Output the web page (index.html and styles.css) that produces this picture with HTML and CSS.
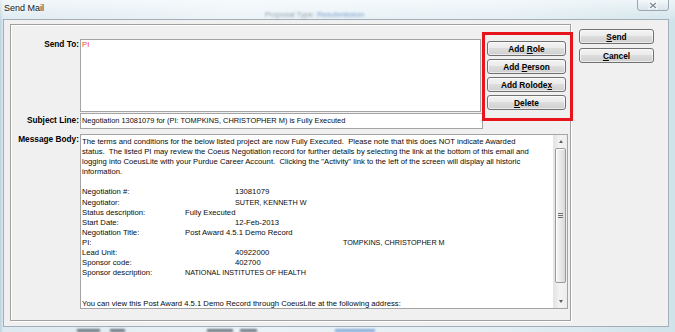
FILE: index.html
```html
<!DOCTYPE html>
<html lang="en">
<head>
    <meta charset="UTF-8">
    <title>Send Mail</title>
    <link rel="stylesheet" href="styles.css">
</head>
<body>
    <div class="titlebar">
        <span class="title">Send Mail</span>
        <span class="ghost">Proposal Type: <span class="ghost-link">Resubmission</span></span>
        <span class="close">
            <svg width="32" height="11" viewBox="0 0 32 11">
                <defs>
                    <linearGradient id="cg" x1="0" y1="0" x2="0" y2="1">
                        <stop offset="0" stop-color="#f4f8fa"/>
                        <stop offset="1" stop-color="#d9e3ea"/>
                    </linearGradient>
                </defs>
                <path d="M0.5 0 V8 Q0.5 10.5 3 10.5 H29 Q31.5 10.5 31.5 8 V0" fill="url(#cg)" stroke="#9aa7b2"/>
                <path d="M13 3 L19 8 M19 3 L13 8" stroke="#fff" stroke-width="3" stroke-linecap="round"/>
                <path d="M13 3 L19 8 M19 3 L13 8" stroke="#7f8c97" stroke-width="1.5"/>
            </svg>
        </span>
    </div>

    <div class="client">
        <div class="panel">
            <div class="form">
                <div class="lbl">Send To:</div>
                <div class="field send-to"><span class="pi">PI</span></div>
                <div class="buttons">
                    <div class="callout"></div>
                    <button>Add <u>R</u>ole</button>
                    <button>Add <u>P</u>erson</button>
                    <button>Add Rolode<u>x</u></button>
                    <button><u>D</u>elete</button>
                </div>

                <div class="lbl subject-lbl">Subject Line:</div>
                <div class="field subject">Negotiation 13081079 for (PI: TOMPKINS, CHRISTOPHER M) is Fully Executed</div>

                <div class="lbl body-lbl">Message Body:</div>
                <div class="field message">
                    <div class="msg-text">
                        <div class="ln">The terms and conditions for the below listed project are now Fully Executed.  Please note that this does NOT indicate Awarded</div>
                        <div class="ln">status.  The listed PI may review the Coeus Negotiation record for further details by selecting the link at the bottom of this email and</div>
                        <div class="ln">logging into CoeusLite with your Purdue Career Account.  Clicking the "Activity" link to the left of the screen will display all historic</div>
                        <div class="ln">information.</div>
                        <div class="ln"></div>
                        <div class="ln"><span class="k">Negotiation #:</span><span class="v2">13081079</span></div>
                        <div class="ln"><span class="k">Negotiator:</span><span class="v2 caps">SUTER, KENNETH W</span></div>
                        <div class="ln"><span class="k">Status description:</span><span>Fully Executed</span></div>
                        <div class="ln"><span class="k">Start Date:</span><span class="v2">12-Feb-2013</span></div>
                        <div class="ln"><span class="k">Negotiation Title:</span><span>Post Award 4.5.1 Demo Record</span></div>
                        <div class="ln"><span class="k">PI:</span><span class="v3 caps">TOMPKINS, CHRISTOPHER M</span></div>
                        <div class="ln"><span class="k">Lead Unit:</span><span class="v2">40922000</span></div>
                        <div class="ln"><span class="k">Sponsor code:</span><span class="v2">402700</span></div>
                        <div class="ln"><span class="k">Sponsor description:</span><span class="caps">NATIONAL INSTITUTES OF HEALTH</span></div>
                        <div class="ln"></div>
                        <div class="ln"></div>
                        <div class="ln">You can view this Post Award 4.5.1 Demo Record through CoeusLite at the following address:</div>
                    </div>
                    <div class="scrollbar">
                        <div class="sb-btn"><span class="arrow-up"></span></div>
                        <div class="sb-thumb"><span class="grip"></span></div>
                        <div class="sb-track"></div>
                        <div class="sb-btn"><span class="arrow-down"></span></div>
                    </div>
                </div>
            </div>
        </div>

        <div class="actions">
            <button><u>S</u>end</button>
            <button><u>C</u>ancel</button>
        </div>
    </div>

    <div class="glass-bottom">
        <span class="blob b1"></span>
        <span class="blob b2"></span>
        <span class="blob b3"></span>
        <span class="blob b4"></span>
        <span class="blob b5"></span>
    </div>
</body>
</html>
```

FILE: styles.css
```css
body {
    margin: 0;
    width: 675px;
    height: 332px;
    overflow: hidden;
    display: flex;
    flex-direction: column;
    font-family: "Liberation Sans", Arial, sans-serif;
    background: linear-gradient(90deg, #bcd2df 0, #dce9f0 3px, #eaf3f7 35%, #e2eef3 75%, #cfe3ea 100%);
}

/* glass title bar */
.titlebar {
    height: 19px;
    display: flex;
    align-items: flex-start;
    background: linear-gradient(180deg, rgba(255,255,255,0.6), rgba(255,255,255,0.1));
}
.title {
    margin: 3px 0 0 4px;
    font-size: 9px;
    line-height: 10px;
    color: #1b1b1b;
    text-shadow: 0 0 4px #fff;
}
.ghost {
    margin: 11px 0 0 221px;
    font-size: 7.5px;
    line-height: 8px;
    color: #7d8b97;
    filter: blur(1.1px);
    opacity: 0.8;
}
.ghost-link {
    color: #5d86c2;
}
.close {
    margin-left: auto;
    margin-right: 6px;
    width: 32px;
    height: 11px;
}
.close svg {
    display: block;
}

/* dialog client area */
.client {
    margin: 0 6px 0 3px;
    height: 308px;
    box-sizing: border-box;
    border: 1px solid #a3aeb8;
    background: #f0f0f0;
    display: flex;
    align-items: flex-start;
}
.panel {
    margin: 4px 0 0 6px;
    width: 561px;
    height: 297px;
    box-sizing: border-box;
    border: 1px solid #a0a0a0;
    box-shadow: inset 1px 1px 0 #fff, 1px 1px 0 #fff;
    padding-top: 14px;
}
.form {
    display: grid;
    grid-template-columns: 69px 403px 87px;
    align-items: start;
}
.lbl {
    grid-column: 1;
    text-align: right;
    padding-right: 1px;
    font-size: 8.3px;
    font-weight: bold;
    line-height: 10px;
    color: #000;
}
.subject-lbl {
    margin-top: 3px;
}
.body-lbl {
    margin-top: 5px;
}

.field {
    background: #fff;
    border: 1px solid #a4a4a4;
    box-sizing: border-box;
    font-size: 7.7px;
    line-height: 10px;
    color: #0a0a0a;
}
.send-to {
    width: 401px;
    height: 73px;
    padding: 0 1px;
}
.pi {
    color: #f03a3a;
}
.subject {
    margin-top: 1px;
    height: 16px;
    padding: 2px 1px;
    font-size: 7.4px;
    white-space: nowrap;
    overflow: hidden;
}
.message {
    grid-column: 2 / span 2;
    margin-top: 5px;
    width: 488px;
    height: 175px;
    display: flex;
    overflow: hidden;
}
.msg-text {
    flex: 1;
    padding: 2px 1px 0;
    overflow: hidden;
}
.ln {
    height: 10.1px;
    line-height: 10.1px;
    white-space: pre;
}
.k {
    display: inline-block;
    width: 103px;
}
.v2 {
    margin-left: 50px;
}
.v3 {
    margin-left: 158px;
}
.caps {
    font-size: 7.2px;
}

/* scrollbar */
.scrollbar {
    width: 14px;
    display: flex;
    flex-direction: column;
    background: linear-gradient(90deg, #e4e4e4, #f3f3f3 45%, #ededed);
    border-left: 1px solid #e6e6e6;
    box-sizing: border-box;
}
.sb-btn {
    height: 13px;
    display: flex;
    justify-content: center;
    align-items: center;
}
.arrow-up,
.arrow-down {
    width: 0;
    height: 0;
    border-left: 2.5px solid transparent;
    border-right: 2.5px solid transparent;
}
.arrow-up {
    border-bottom: 3px solid #606060;
}
.arrow-down {
    border-top: 3px solid #606060;
}
.sb-thumb {
    height: 135px;
    margin: 0 1px;
    box-sizing: border-box;
    border: 1px solid #9a9a9a;
    border-radius: 2px;
    background: linear-gradient(90deg, #f6f6f6, #e9e9e9 50%, #d9d9d9);
    box-shadow: inset 1px 1px 0 #fff;
    display: flex;
    justify-content: center;
    align-items: center;
}
.grip {
    width: 5px;
    height: 5px;
    background: repeating-linear-gradient(180deg, #6f6f6f 0, #6f6f6f 1px, transparent 1px, transparent 2px);
}
.sb-track {
    flex: 1;
}

/* buttons */
button {
    height: 15px;
    padding: 0;
    border: 1px solid #707070;
    border-radius: 3px;
    background: linear-gradient(180deg, #f3f3f3 0%, #ebebeb 45%, #dddddd 50%, #cfcfcf 100%);
    box-shadow: inset 0 0 0 1px rgba(255,255,255,0.6);
    font-family: "Liberation Sans", Arial, sans-serif;
    font-size: 8.3px;
    font-weight: bold;
    line-height: 12px;
    color: #000;
}
.buttons {
    position: relative;
    margin: 2px 0 0 4px;
    width: 79px;
    display: flex;
    flex-direction: column;
    gap: 3px;
}
.callout {
    position: absolute;
    left: -5px;
    top: -9px;
    right: -7px;
    bottom: -11px;
    border: 3px solid #e8141c;
}
.actions {
    margin: 9px 0 0 8px;
    width: 75px;
    display: flex;
    flex-direction: column;
    gap: 4px;
}

/* glass strip under the window */
.glass-bottom {
    height: 5px;
    display: flex;
    align-items: flex-end;
}
.blob {
    height: 3px;
    background: #4a5560;
    filter: blur(1px);
    opacity: 0.8;
}
.b1 { margin-left: 77px; width: 23px; }
.b2 { margin-left: 10px; width: 15px; }
.b3 { margin-left: 82px; width: 26px; }
.b4 { margin-left: 7px; width: 17px; }
.b5 { margin-left: 78px; width: 40px; background: #6f9bd0; }
```
